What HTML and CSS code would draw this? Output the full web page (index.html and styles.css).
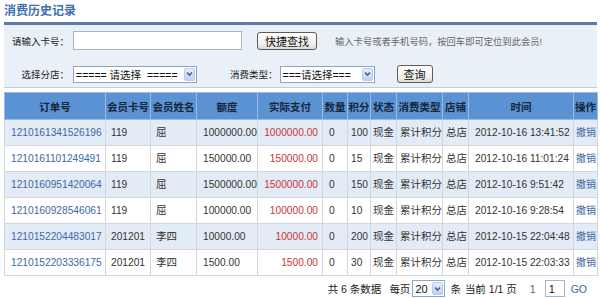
FILE: index.html
```html
<!DOCTYPE html>
<html lang="zh-CN">
<head>
    <meta charset="UTF-8">
    <meta name="viewport" content="width=device-width, initial-scale=1.0">
    <title>消费历史记录</title>
    <link rel="stylesheet" href="styles.css">
</head>
<body>
    <div class="page">
        <h2 class="title">消费历史记录</h2>

        <!-- 查询条件 -->
        <div class="search">
            <div class="row">
                <span class="lbl">请输入卡号：</span>
                <input class="card-input" type="text">
                <button class="btn quick">快捷查找</button>
                <span class="hint">输入卡号或者手机号码，按回车即可定位到此会员!</span>
            </div>
            <div class="row">
                <span class="lbl">选择分店：</span>
                <span class="select shop">
                    <span class="val">=====&nbsp;请选择&nbsp;&nbsp;=====</span>
                    <span class="arrow"><svg width="7" height="6" viewBox="0 0 7 6"><path d="M1 1.5 L3.5 4 L6 1.5" fill="none" stroke="#4a5f86" stroke-width="1.6"/></svg></span>
                </span>
                <span class="lbl type-lbl">消费类型：</span>
                <span class="select type">
                    <span class="val">===请选择===</span>
                    <span class="arrow"><svg width="7" height="6" viewBox="0 0 7 6"><path d="M1 1.5 L3.5 4 L6 1.5" fill="none" stroke="#4a5f86" stroke-width="1.6"/></svg></span>
                </span>
                <button class="btn query">查询</button>
            </div>
        </div>

        <!-- 消费记录列表 -->
        <table class="grid">
            <colgroup>
                <col class="c-order"><col class="c-card"><col class="c-name"><col class="c-amount">
                <col class="c-pay"><col class="c-qty"><col class="c-point"><col class="c-state">
                <col class="c-kind"><col class="c-shop"><col class="c-time"><col class="c-op">
            </colgroup>
            <thead>
                <tr>
                    <th>订单号</th><th>会员卡号</th><th>会员姓名</th><th>额度</th><th>实际支付</th><th>数量</th>
                    <th>积分</th><th>状态</th><th>消费类型</th><th>店铺</th><th>时间</th><th>操作</th>
                </tr>
            </thead>
            <tbody>
                <tr class="alt">
                    <td><a href="#">1210161341526196</a></td><td>119</td><td class="cn">屈</td><td>1000000.00</td><td class="pay">1000000.00</td><td>0</td>
                    <td>100</td><td class="cn">现金</td><td class="cn">累计积分</td><td class="cn">总店</td><td>2012-10-16 13:41:52</td><td class="cn op"><a href="#">撤销</a></td>
                </tr>
                <tr>
                    <td><a href="#">1210161101249491</a></td><td>119</td><td class="cn">屈</td><td>150000.00</td><td class="pay">150000.00</td><td>0</td>
                    <td>15</td><td class="cn">现金</td><td class="cn">累计积分</td><td class="cn">总店</td><td>2012-10-16 11:01:24</td><td class="cn op"><a href="#">撤销</a></td>
                </tr>
                <tr class="alt">
                    <td><a href="#">1210160951420064</a></td><td>119</td><td class="cn">屈</td><td>1500000.00</td><td class="pay">1500000.00</td><td>0</td>
                    <td>150</td><td class="cn">现金</td><td class="cn">累计积分</td><td class="cn">总店</td><td>2012-10-16 9:51:42</td><td class="cn op"><a href="#">撤销</a></td>
                </tr>
                <tr>
                    <td><a href="#">1210160928546061</a></td><td>119</td><td class="cn">屈</td><td>100000.00</td><td class="pay">100000.00</td><td>0</td>
                    <td>10</td><td class="cn">现金</td><td class="cn">累计积分</td><td class="cn">总店</td><td>2012-10-16 9:28:54</td><td class="cn op"><a href="#">撤销</a></td>
                </tr>
                <tr class="alt">
                    <td><a href="#">1210152204483017</a></td><td>201201</td><td class="cn">李四</td><td>10000.00</td><td class="pay">10000.00</td><td>0</td>
                    <td>200</td><td class="cn">现金</td><td class="cn">累计积分</td><td class="cn">总店</td><td>2012-10-15 22:04:48</td><td class="cn op"><a href="#">撤销</a></td>
                </tr>
                <tr>
                    <td><a href="#">1210152203336175</a></td><td>201201</td><td class="cn">李四</td><td>1500.00</td><td class="pay">1500.00</td><td>0</td>
                    <td>30</td><td class="cn">现金</td><td class="cn">累计积分</td><td class="cn">总店</td><td>2012-10-15 22:03:33</td><td class="cn op"><a href="#">撤销</a></td>
                </tr>
            </tbody>
        </table>

        <!-- 分页 -->
        <div class="pager">
            <span>共 6 条数据</span>
            <span class="per">每页</span>
            <span class="select size">
                <span class="val">20</span>
                <span class="arrow"><svg width="7" height="6" viewBox="0 0 7 6"><path d="M1 1.5 L3.5 4 L6 1.5" fill="none" stroke="#4a5f86" stroke-width="1.6"/></svg></span>
            </span>
            <span class="unit">条</span>
            <span class="cur">当前 1/1 页</span>
            <a href="#" class="num">1</a>
            <input class="jump" type="text" value="1">
            <a href="#" class="go">GO</a>
        </div>
    </div>
</body>
</html>
```

FILE: styles.css
```css
* {
    margin: 0;
    padding: 0;
    box-sizing: border-box;
}

body {
    background: #fff;
    color: #333;
    font-family: "Liberation Sans", "Noto Sans CJK SC", sans-serif;
    font-size: 10.5px;
}

a {
    color: #3d68a6;
    text-decoration: none;
}

.page {
    padding: 0 3px 0 4px;
}

/* 标题 */
.title {
    height: 25px;
    line-height: 22px;
    font-size: 12px;
    font-weight: bold;
    color: #3f6fae;
    border-bottom: 3px solid #5a7aab;
}

/* 查询条件 */
.search {
    background: #e9f0f8;
    padding: 6px 0 4px;
    border-bottom: 1px solid #c6cdd5;
}

.row {
    display: flex;
    align-items: center;
    height: 19px;
}

.row + .row {
    margin-top: 15px;
    height: 18px;
}

.lbl {
    width: 65px;
    text-align: right;
    font-size: 9.5px;
    color: #222;
    margin-right: 4px;
}

.type-lbl {
    width: auto;
    margin-left: 33px;
    margin-right: 2px;
}

.card-input {
    width: 169px;
    height: 19px;
    border: 1px solid #a5b6c8;
    background: #fff;
}

.btn {
    font-family: "Noto Sans CJK SC", sans-serif;
    font-size: 11px;
    color: #111;
    border: 1px solid #5c5c5c;
    border-radius: 3px;
    background: linear-gradient(#ffffff, #f0efea 70%, #dcdad2);
    display: flex;
    align-items: center;
    justify-content: center;
}

.quick {
    width: 60px;
    height: 18px;
    margin-left: 15px;
    margin-top: 1px;
}

.query {
    width: 36px;
    height: 18px;
    margin-left: 22px;
}

.hint {
    margin-left: 18px;
    font-size: 9.3px;
    color: #666;
}

.select {
    display: inline-flex;
    align-items: center;
    height: 17px;
    border: 1px solid #8fa6c0;
    background: #fff;
    padding-left: 2px;
    color: #111;
}

.select .val {
    white-space: nowrap;
}

.select .arrow {
    margin-left: auto;
    margin-right: 1px;
    width: 11px;
    height: 13px;
    border: 1px solid #b8cbeb;
    border-radius: 2px;
    background: linear-gradient(#e3ecfa, #bfd2f1);
    display: flex;
    align-items: center;
    justify-content: center;
}

.shop {
    width: 124px;
}

.type {
    width: 95px;
}

/* 列表 */
.grid {
    width: 593px;
    margin-top: 4px;
    border-collapse: collapse;
    table-layout: fixed;
}

.c-order { width: 101px; }
.c-card { width: 45px; }
.c-name { width: 46px; }
.c-amount { width: 61px; }
.c-pay { width: 65px; }
.c-qty { width: 25px; }
.c-point { width: 23px; }
.c-state { width: 26px; }
.c-kind { width: 46px; }
.c-shop { width: 26px; }
.c-time { width: 105px; }
.c-op { width: 24px; }

.grid th {
    height: 27px;
    background: #5a92d3;
    color: #17263a;
    font-family: "Noto Sans CJK SC", sans-serif;
    font-size: 10.5px;
    font-weight: bold;
    text-align: center;
    border: 1px solid #9cbbe3;
    white-space: nowrap;
    overflow: hidden;
}

.grid td {
    height: 26px;
    border: 1px solid #d3d6da;
    white-space: nowrap;
    overflow: hidden;
    padding: 0 0 0 3px;
    color: #333;
    font-size: 10.2px;
}

.grid tr.alt td {
    background: #e3ebf6;
}

.grid td.cn {
    font-size: 10.5px;
    padding-bottom: 2px;
}

.grid td:nth-child(1),
.grid td:nth-child(4),
.grid td:nth-child(6),
.grid td:nth-child(11) {
    padding-left: 6px;
}

.grid td:nth-child(2),
.grid td:nth-child(3) {
    padding-left: 5px;
}

.grid td:nth-child(8) {
    padding-left: 2px;
}

.grid td.op {
    font-size: 10px;
    padding-left: 2px;
}

.grid td.pay {
    color: #cc3338;
    text-align: right;
    padding: 0 4px 0 0;
}

/* 分页 */
.pager {
    display: flex;
    align-items: center;
    justify-content: flex-end;
    height: 23px;
    padding: 2px 10px 0 0;
    color: #222;
}

.pager .per {
    margin-left: 8px;
}

.pager .size {
    width: 33px;
    margin-left: 2px;
    font-size: 11px;
}

.pager .unit {
    margin-left: 5px;
}

.pager .cur {
    margin-left: 4px;
}

.pager .num {
    margin-left: 13px;
}

.pager .jump {
    width: 20px;
    height: 17px;
    margin-left: 9px;
    border: 1px solid #a5b6c8;
    padding-left: 3px;
    font-family: "Liberation Sans", sans-serif;
    font-size: 11px;
    color: #111;
}

.pager .go {
    margin-left: 6px;
}
```
